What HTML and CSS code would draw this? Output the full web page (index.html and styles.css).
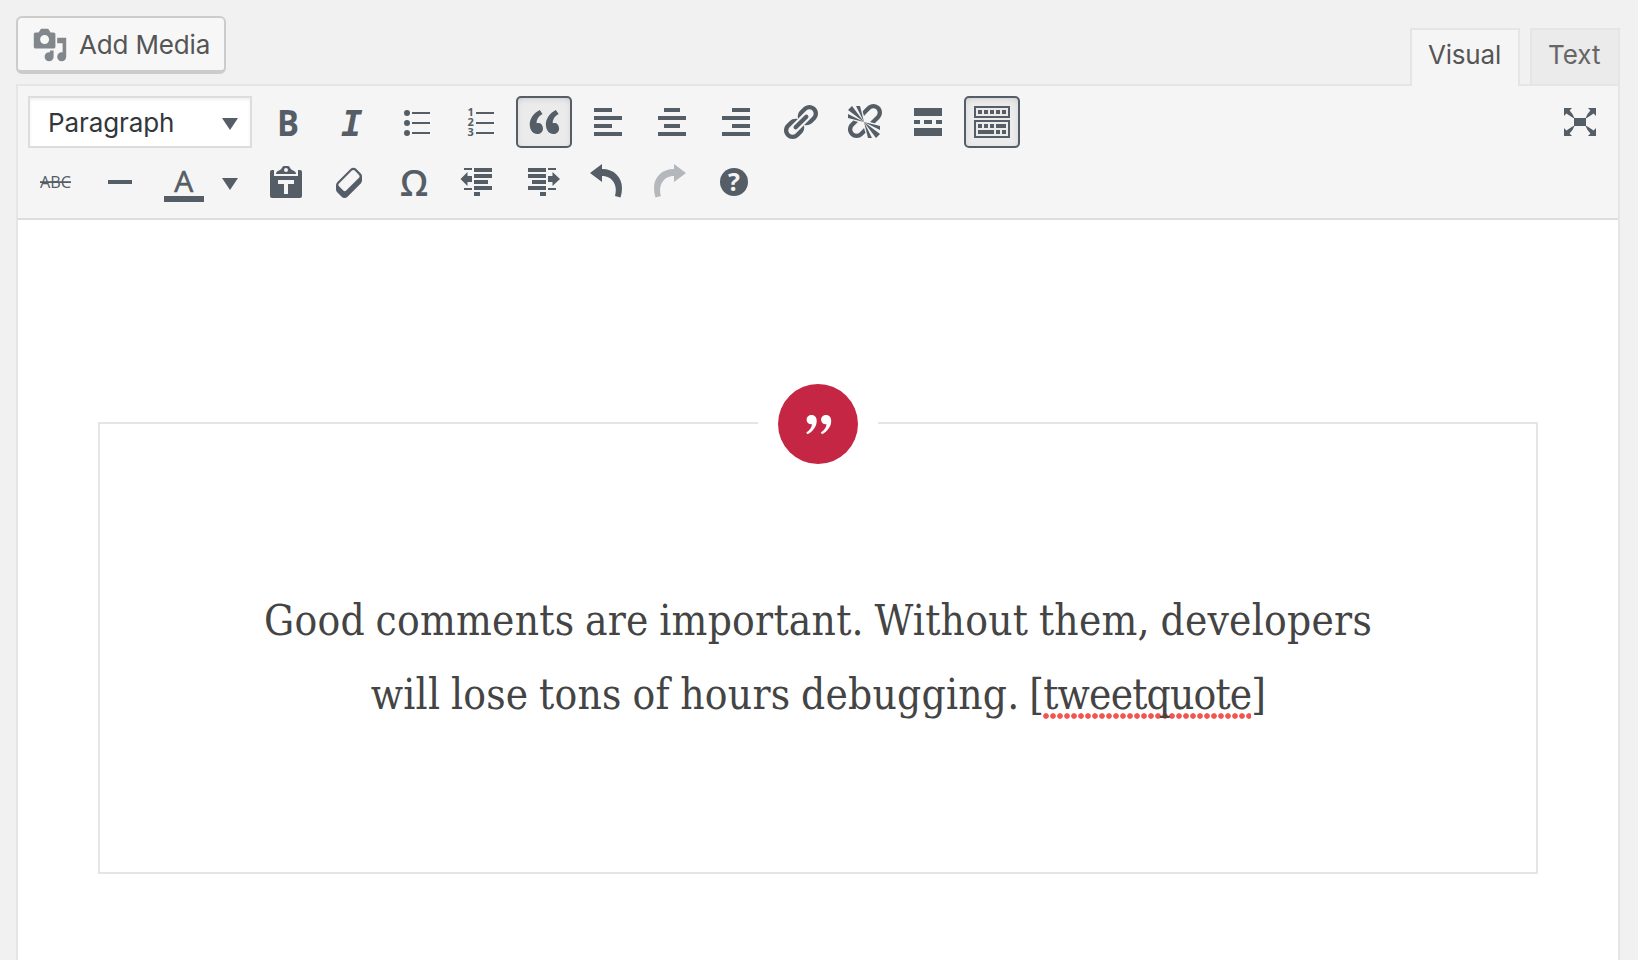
FILE: index.html
```html
<!DOCTYPE html>
<html lang="en">
<head>
<meta charset="utf-8">
<title>Editor</title>
<link rel="stylesheet" href="styles.css">
</head>
<body>
<header class="tools">
  <button class="add-media">
    <svg class="media-icon" viewBox="0 0 20 20"><path d="M13 11V4c0-.55-.45-1-1-1h-1.67L9 1H5L3.67 3H2c-.55 0-1 .45-1 1v7c0 .55.45 1 1 1h10c.55 0 1-.45 1-1zM7 4.5c1.38 0 2.5 1.12 2.5 2.5S8.38 9.5 7 9.5 4.5 8.38 4.5 7 5.62 4.5 7 4.5zM14 6h5v10.5c0 1.38-1.12 2.5-2.5 2.5S14 17.88 14 16.5s1.12-2.5 2.5-2.5c.17 0 .34.02.5.05V9h-3V6zm-4 8.05V13h2v3.5c0 1.38-1.12 2.5-2.5 2.5S7 17.88 7 16.5 8.12 14 9.5 14c.17 0 .34.02.5.05z"/></svg>
    <span class="add-label">Add Media</span>
  </button>
  <nav class="tabs">
    <a class="tab tab-active"><span class="visual-label">Visual</span></a>
    <a class="tab"><span class="text-label">Text</span></a>
  </nav>
</header>
<main class="editor">
  <div class="toolbar">
    <div class="row">
      <div class="select"><span class="select-label">Paragraph</span><svg class="caret" viewBox="0 0 16 12"><path d="M0 0h16L8 12z"/></svg></div>
      <svg class="btn" viewBox="0 0 56 52"><text class="bold" x="17" y="40" textLength="22" lengthAdjust="spacingAndGlyphs">B</text></svg>
      <svg class="btn" viewBox="0 0 56 52"><text class="ital" x="17" y="40">I</text></svg>
      <svg class="btn" viewBox="0 0 56 52"><circle cx="19" cy="17" r="3"/><circle cx="19" cy="27" r="3"/><circle cx="19" cy="37" r="3"/><path d="M24 16h18v2H24zM24 26h18v2H24zM24 36h18v2H24z"/></svg>
      <svg class="btn" viewBox="0 0 56 52"><text class="num" x="15.5" y="20">1</text><text class="num" x="15.5" y="30">2</text><text class="num" x="15.5" y="40">3</text><path d="M24 16h18v2H24zM24 26h18v2H24zM24 36h18v2H24z"/></svg>
      <span class="btn on"><svg class="in" viewBox="0 0 56 52"><path transform="translate(8 6) scale(2)" d="M9.49 13.22c0-.74-.2-1.38-.61-1.9-.62-.78-1.83-.88-2.53-.72-.29-1.65 1.11-3.75 2.92-4.65L7.88 4c-2.73 1.3-5.42 4.28-4.96 8.05C3.21 14.43 4.59 16 6.54 16c.85 0 1.56-.25 2.12-.75s.83-1.18.83-2.03zm8.05 0c0-.74-.2-1.38-.61-1.9-.63-.78-1.83-.88-2.53-.72-.29-1.65 1.11-3.75 2.92-4.65L15.93 4c-2.73 1.3-5.41 4.28-4.95 8.05.29 2.38 1.66 3.95 3.61 3.95.85 0 1.56-.25 2.12-.75s.83-1.18.83-2.03z"/></svg></span>
      <svg class="btn" viewBox="0 0 56 52"><path d="M14 12h18v4H14zM14 20h28v4H14zM14 28h18v4H14zM14 36h28v4H14z"/></svg>
      <svg class="btn" viewBox="0 0 56 52"><path d="M20 12h16v4H20zM14 20h28v4H14zM20 28h16v4H20zM14 36h28v4H14z"/></svg>
      <svg class="btn" viewBox="0 0 56 52"><path d="M24 12h18v4H24zM14 20h28v4H14zM24 28h18v4H24zM14 36h28v4H14z"/></svg>
      <svg class="btn" viewBox="0 0 56 52"><path transform="translate(8 6) scale(2)" d="M17.74 2.76c1.68 1.69 1.68 4.41 0 6.1l-1.53 1.52c-1.12 1.12-2.7 1.47-4.14 1.09l2.62-2.61.76-.77.76-.76c.84-.84.84-2.2 0-3.04-.84-.85-2.2-.85-3.04 0l-.77.76-3.38 3.38c-.37-1.44-.02-3.02 1.1-4.14l1.52-1.53c1.69-1.68 4.42-1.68 6.1 0zM8.59 13.43l5.34-5.34c.42-.42.42-1.1 0-1.52-.44-.43-1.13-.39-1.53 0l-5.33 5.34c-.42.42-.42 1.1 0 1.52.44.43 1.13.39 1.52 0zm-.76 2.29l4.14-4.15c.38 1.44.03 3.02-1.09 4.14l-1.52 1.53c-1.69 1.68-4.41 1.68-6.1 0-1.68-1.68-1.68-4.42 0-6.1l1.53-1.52c1.12-1.12 2.7-1.47 4.14-1.1l-4.14 4.15c-.85.84-.85 2.2 0 3.05.84.84 2.2.84 3.04 0z"/></svg>
      <svg class="btn" viewBox="0 0 56 52"><path transform="translate(8 6) scale(2)" d="M17.74 2.26c1.68 1.69 1.68 4.41 0 6.1l-1.53 1.52c-.32.33-.69.58-1.08.77L13 10l1.69-1.64.76-.77.76-.76c.84-.84.84-2.2 0-3.04-.84-.85-2.2-.85-3.04 0l-.77.76-.76.76L10 7l-.65-2.14c.19-.38.44-.75.77-1.07l1.52-1.53c1.69-1.68 4.42-1.68 6.1 0zM2 4l8 6-6-8zm4-2l4 8-2-8H6zM2 6l8 4-8-2V6zm7.36 7.69L10 13l.74 2.35-1.38 1.39c-1.69 1.68-4.41 1.68-6.1 0-1.68-1.68-1.68-4.42 0-6.1l1.39-1.38L7 10l-.69.64-1.52 1.53c-.85.84-.85 2.2 0 3.04.84.85 2.2.85 3.04 0zM18 16l-8-6 6 8zm-4 2l-4-8 2 8h2zm4-4l-8-4 8 2v2z"/></svg>
      <svg class="btn" viewBox="0 0 56 52"><path d="M14 12h28v8H14zM14 24h6v4h-6zM24 24h8v4h-8zM36 24h6v4h-6zM14 32h28v8H14z"/></svg>
      <span class="btn on"><svg class="in" viewBox="0 0 56 52"><path fill-rule="evenodd" d="M10 10h36v12H10zm2 2v8h32v-8zM10 24h36v18H10zm2 2v14h32V26z"/><path d="M14 14h4v4h-4zM20 14h4v4h-4zM26 14h4v4h-4zM32 14h4v4h-4zM38 14h4v4h-4zM14 28h4v4h-4zM20 28h4v4h-4zM26 28h4v4h-4zM32 28h10v4H32zM14 34h16v4H14zM32 34h4v4h-4zM38 34h4v4h-4z"/></svg></span>
      <svg class="btn end" viewBox="0 0 56 52"><rect x="22" y="22" width="12" height="8"/><path d="M12 12h8l-2.400 2.400Q20.500 17 22.800 22.800Q17 19.500 14.400 17.600L12 20zM44 12h-8l2.400 2.400Q35.500 17 33.200 22.800Q39 19.500 41.600 17.600L44 20zM12 40h8l-2.400-2.400Q20.500 35 22.800 29.200Q17 32.500 14.400 34.400L12 32zM44 40h-8l2.400-2.400Q35.500 35 33.200 29.200Q39 32.500 41.600 34.400L44 32z"/></svg>
    </div>
    <div class="row">
      <svg class="btn" viewBox="0 0 56 52"><text class="abc" x="12" y="32" textLength="31" lengthAdjust="spacingAndGlyphs">ABC</text><path d="M12 25.200h31v1.800H12z"/></svg>
      <svg class="btn" viewBox="0 0 56 52"><path d="M16 24h24v4H16z"/></svg>
      <svg class="btn split" viewBox="0 0 94 52"><text class="fore" x="18.300" y="36">A</text><path d="M8 40h40v6H8zM66 22h16l-8 12z"/></svg>
      <svg class="btn" viewBox="0 0 56 52"><path fill-rule="evenodd" d="M14 14h2v6h24v-6h2q2 0 2 2v24q0 2-2 2H14q-2 0-2-2V16q0-2 2-2zM20 24v4h6v10h4V28h6v-4z"/><path fill-rule="evenodd" d="M18 18q0-2.500 3-3.500q2.500-1 3-2.800q.5-1.700 2-1.700h4q1.500 0 2 1.700q.5 1.800 3 2.800q3 1 3 3.500zM28 12a2 2 0 1 0 0 4a2 2 0 1 0 0-4z"/></svg>
      <svg class="btn" viewBox="0 0 56 52"><path transform="translate(8 6) scale(2)" d="M14.290 4.590l1.100 1.110c.41.4.61.94.61 1.470v2.120c0 .53-.2 1.070-.61 1.470l-6.630 6.630c-.4.41-.94.61-1.470.61s-1.070-.2-1.470-.61l-1.110-1.100-1.100-1.110c-.41-.4-.61-.94-.61-1.470v-2.120c0-.54.2-1.070.61-1.480l6.630-6.620c.4-.41.94-.61 1.470-.61s1.060.2 1.470.61zm-6.210 9.700l6.420-6.420c.39-.39.39-1.030 0-1.430L12.360 4.300c-.19-.19-.45-.29-.72-.29s-.52.1-.71.29l-6.420 6.420c-.39.4-.39 1.040 0 1.430l2.140 2.140c.38.38 1.040.38 1.430 0z"/></svg>
      <svg class="btn" viewBox="0 0 56 52"><text class="omega" x="28" y="40">Ω</text></svg>
      <svg class="btn" viewBox="0 0 56 52"><path d="M24 12h18v4H24zM24 18h18v4H24zM24 24h14v4H24zM24 30h18v4H24zM24 36h6v4h-6zM14 12h8v2h-8zM14 32h8v2h-8zM10.500 23l7-7v4H22v6h-4.500v4z"/></svg>
      <svg class="btn" viewBox="0 0 56 52"><path d="M14 12h18v4H14zM14 18h18v4H14zM18 24h14v4H18zM14 30h18v4H14zM26 36h6v4h-6zM34 12h8v2h-8zM34 32h8v2h-8zM46 23l-7.500-7v4H34v6h4.500v4z"/></svg>
      <svg class="btn" viewBox="0 0 56 52"><path d="M12 17L24 8v5C36 13 44 21 44 32Q44 37 42.500 41.500L37 40C40 30 35 20 24 20v6z"/></svg>
      <svg class="btn off" viewBox="0 0 56 52"><path d="M44 17L32 8v5C20 13 12 21 12 32Q12 37 13.500 41.500L19 40C16 30 21 20 32 20v6z"/></svg>
      <svg class="btn" viewBox="0 0 56 52"><circle cx="28" cy="26" r="14"/><text class="help" x="28" y="35">?</text></svg>
    </div>
  </div>
  <section class="content">
    <blockquote class="quote">
      <span class="gap"><span class="badge"><svg class="marks" viewBox="0 0 26 20"><path d="M5.500 0C9 0 10.700 2.500 10.700 6C10.700 12 6.500 16.500 1.500 19.300L.3 17.600C3.800 15.300 5.600 12.800 6 9.300C3 9.800 .6 7.700 .6 4.800C.6 2 2.800 0 5.500 0z"/><path d="M20 0C23.500 0 25.200 2.500 25.200 6C25.200 12 21 16.500 16 19.300L14.800 17.600C18.300 15.300 20.100 12.800 20.500 9.300C17.500 9.800 15.100 7.700 15.100 4.800C15.100 2 17.300 0 20 0z"/></svg></span></span>
      <p class="line">Good comments are important. Without them, developers</p>
      <p class="line">will lose tons of hours debugging. <span class="tag">[<span class="typo">tweetquote</span>]</span></p>
    </blockquote>
  </section>
</main>
</body>
</html>
```

FILE: styles.css
```css
* { box-sizing: border-box; }
body { margin: 0; height: 960px; overflow: hidden; background: #f1f1f1; font-family: Inter, "Liberation Sans", sans-serif; color: #555; display: flex; flex-direction: column; padding: 0 18px 0 16px; }
.tools { height: 84px; display: flex; justify-content: space-between; flex: none; }
.add-media { margin-top: 16px; width: 210px; height: 58px; padding: 2px 0 0 14px; border: 2px solid #ccc; border-bottom-width: 4px; border-radius: 6px; background: #f7f7f7; display: flex; align-items: center; font: 400 26px Inter, sans-serif; letter-spacing: -.15px; color: #555; }
.add-label { padding-bottom: 2px; }
.media-icon { width: 36px; height: 36px; fill: #82878c; margin-right: 11px; }
.tabs { display: flex; gap: 10px; align-items: flex-start; padding-top: 28px; }
.tab { height: 56px; border: 2px solid #e5e5e5; border-bottom: 0; background: #ebebeb; width: 90px; font-size: 26px; line-height: 49px; padding-left: 16px; color: #666; }
.tab-active { width: 110px; height: 58px; background: #f5f5f5; color: #555; position: relative; }
.visual-label { letter-spacing: -.2px; }
.editor { flex: 1; display: flex; flex-direction: column; border: 2px solid #e5e5e5; border-bottom: 0; background: #fff; }
.toolbar { height: 134px; padding: 10px; background: #f5f5f5; border-bottom: 2px solid #ddd; display: flex; flex-direction: column; gap: 8px; }
.row { display: flex; gap: 8px; height: 52px; }
.select { width: 224px; border: 2px solid #ddd; background: #fff; box-shadow: inset 0 2px 3px rgba(0,0,0,.06); display: flex; align-items: center; justify-content: space-between; padding: 1px 12px 0 18px; color: #32373c; font-size: 26px; letter-spacing: -.1px; }
.caret { width: 16px; height: 12px; fill: #555d66; margin-top: 2px; }
.btn { width: 56px; height: 52px; fill: #555d66; flex: none; display: block; }
.on { border: 2px solid #555d66; border-radius: 5px; background: #ebebeb; box-shadow: inset 0 2px 8px -4px rgba(0,0,0,.25); }
.in { display: block; width: 56px; height: 52px; margin: -2px; }
.end { margin-left: auto; }
.split { width: 94px; }
.off { opacity: .4; }
.bold { font: 700 36px "Open Sans", sans-serif; }
.ital { font: italic 700 36px "DejaVu Sans Mono", monospace; }
.num { font: 700 11px "Open Sans", sans-serif; }
.abc { font: 400 17px "Open Sans", sans-serif; }
.fore { font: 500 30px "Open Sans", sans-serif; stroke: #555d66; stroke-width: .6px; }
.omega { font: 600 36px "Open Sans", sans-serif; text-anchor: middle; }
.help { font: 700 25px "Open Sans", sans-serif; text-anchor: middle; fill: #f5f5f5; }
.content { padding: 202px 80px 0; }
.quote { position: relative; margin: 0; height: 452px; border: 2px solid #e5e5e5; padding-top: 160px; text-align: center; }
.gap { position: absolute; left: 658px; top: -40px; width: 120px; height: 80px; background: #fff; display: flex; justify-content: center; }
.badge { width: 80px; height: 80px; border-radius: 50%; background: #c52643; display: flex; align-items: center; justify-content: center; padding: 2px 0 0 1px; }
.marks { width: 26px; height: 20px; fill: #fff; }
.line { margin: 0; font: 400 42px/74px "DejaVu Serif Condensed", "DejaVu Serif", serif; letter-spacing: .25px; word-spacing: -1.6px; color: #444; white-space: nowrap; }
.tag { margin-left: -1px; letter-spacing: -.8px; }
.typo { background: radial-gradient(circle at 3px 3px, #f0564f 2.400px, transparent 3.200px) 0 100% / 7px 6px repeat-x; }
```
